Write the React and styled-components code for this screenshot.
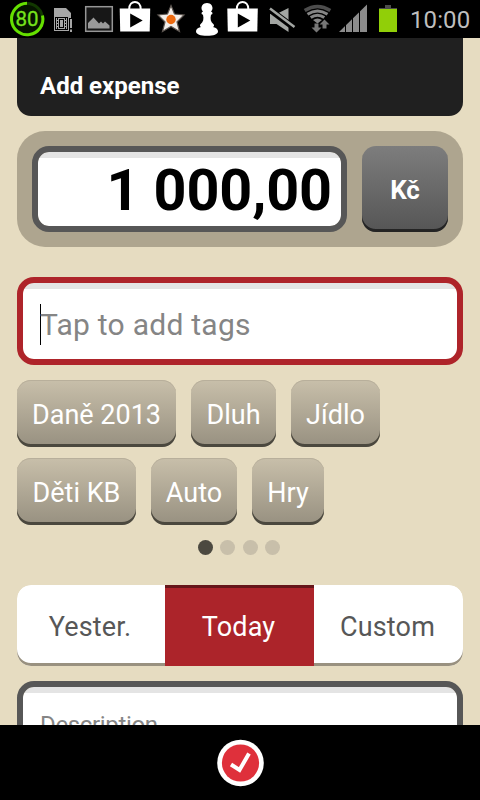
import React from "react";
import styled, { createGlobalStyle } from "styled-components";

const GlobalStyle = createGlobalStyle`
  * { box-sizing: border-box; }
  body { margin: 0; background: #e6dcc1; }
`;

const Screen = styled.div`
  width: 480px;
  height: 800px;
  overflow: hidden;
  display: flex;
  flex-direction: column;
  background: #e6dcc1;
  font-family: Roboto, "Noto Sans", sans-serif;
`;

const StatusBar = styled.header`
  flex: none;
  height: 38px;
  display: flex;
  background: #000;
`;

const Glyph = styled.svg`
  flex: none;
  display: block;
`;

const Clock = styled.time`
  padding-left: 6px;
  font-size: 24px;
  line-height: 40px;
  letter-spacing: 0.1px;
  white-space: nowrap;
  color: #bebebe;
`;

const Content = styled.main`
  flex: 1;
  min-height: 0;
  overflow: hidden;
  padding: 0 17px;
  display: flex;
  flex-direction: column;
`;

const TitleBar = styled.div`
  flex: none;
  height: 78px;
  padding: 33px 23px 0;
  border-radius: 0 0 14px 14px;
  background: #202020;
`;

const Title = styled.h1`
  margin: 0;
  font-size: 24px;
  line-height: 30px;
  font-weight: 700;
  color: #fff;
`;

const AmountPanel = styled.section`
  flex: none;
  height: 116px;
  margin-top: 15px;
  padding: 15px;
  display: flex;
  gap: 15px;
  border-radius: 28px;
  background: #aea58f;
`;

const Field = styled.div`
  flex: ${(p) => (p.$grow ? 1 : "none")};
  height: ${(p) => p.$height}px;
  margin-top: ${(p) => p.$top || 0}px;
  padding: ${(p) => p.$inset || 0}px 9px 0 17px;
  display: flex;
  align-items: center;
  justify-content: ${(p) => (p.$end ? "flex-end" : "flex-start")};
  border: 6px solid ${(p) => p.$edge || "#575757"};
  border-radius: 17px;
  background: linear-gradient(#e4e4e4 6px, #fff 6px) padding-box;
`;

const Amount = styled.span`
  font-size: 57.5px;
  line-height: 68px;
  font-weight: 700;
  letter-spacing: -0.1px;
  white-space: pre;
  color: #000;
`;

const Currency = styled.button`
  width: 86px;
  height: 86px;
  padding: 1px 0 0;
  border: 0;
  border-radius: 14px;
  background: linear-gradient(#7d7d7d, #555);
  box-shadow: inset 0 -3px 0 #242424;
  color: #fff;
  font: 700 26px/30px Roboto, sans-serif;
`;

const Caret = styled.i`
  width: 1px;
  height: 41px;
  margin-right: -1px;
  background: #000;
`;

const Placeholder = styled.span`
  font-size: ${(p) => p.$size}px;
  line-height: 36px;
  letter-spacing: ${(p) => p.$spacing || 0}px;
  color: #858585;
`;

const TagRow = styled.div`
  flex: none;
  display: flex;
  gap: 15px;
  margin-top: ${(p) => p.$top}px;
`;

const Tag = styled.button`
  flex: none;
  width: ${(p) => p.$width}px;
  height: 67px;
  padding: 3px 0 0;
  border: 0;
  border-radius: 14px;
  background: linear-gradient(#c8bfaa, #979080);
  box-shadow: inset 0 -3px 0 #4b483e, inset 0 1px 0 #b8af9b;
  color: #fff;
  font: 400 27px/32px Roboto, sans-serif;
  white-space: nowrap;
`;

const Pager = styled.div`
  flex: none;
  height: 15px;
  margin-top: 15px;
  margin-right: 2px;
  display: flex;
  justify-content: center;
  gap: 7.5px;
`;

const Dot = styled.i`
  width: 15px;
  height: 15px;
  border-radius: 50%;
  background: ${(p) => (p.$active ? "#4c4940" : "#c8bfaa")};
`;

const Segments = styled.div`
  flex: none;
  height: 81px;
  margin-top: 30px;
  display: grid;
  grid-template-columns: 148px 149px 149px;
  border-radius: 14px;
  overflow: hidden;
`;

const Segment = styled.button`
  border: 0;
  padding: 3px 2px 0 0;
  border-radius: ${(p) => p.$radius || 0};
  background: ${(p) => (p.$active ? "#ac242a" : "#fff")};
  box-shadow: ${(p) => (p.$active ? "inset 0 3px 0 #66161a" : "inset 0 -3px 0 #999180")};
  color: ${(p) => (p.$active ? "#fff" : "#575757")};
  font: 400 27px/32px Roboto, sans-serif;
  letter-spacing: 0.15px;
`;

const BottomBar = styled.footer`
  flex: none;
  height: 75px;
  display: flex;
  align-items: center;
  justify-content: center;
  background: #000;
`;

const StatusIcon = ({ x, w, children }) => (
  <Glyph width={w} height="38" viewBox={`${x} 0 ${w} 38`}>{children}</Glyph>
);

const StoreBag = ({ x, w, left }) => (
  <StatusIcon x={x} w={w}>
    <g transform={`translate(${left} 0)`}>
      <path d="M9.500 9C9.500 -0.500 21 -0.500 21 9" fill="none" stroke="#fff" strokeWidth="2" />
      <path d="M0 8.500h30.500l-.5 23h-29.500z" fill="#fff" />
      <path d="M10.500 13.500v14l12.500-7z" fill="#000" />
    </g>
  </StatusIcon>
);

const StatusIcons = () => (
  <>
    <StatusIcon x={0} w={48}>
      <circle cx="27" cy="19" r="15.500" fill="#061400" stroke="#123800" strokeWidth="3" />
      <path d="M42.500 15.500A15.700 15.700 0 1 1 27 3.300" fill="none" stroke="#66e000" strokeWidth="3" />
      <text x="27" y="26.200" textAnchor="middle" fontFamily="Roboto, sans-serif" fontSize="20.500" fill="#76e41c" stroke="#76e41c" strokeWidth=".3">80</text>
    </StatusIcon>
    <StatusIcon x={48} w={32}>
      <path d="M54 8h12l5 5v18h-17z" fill="#a6a6a6" />
      <rect x="55.500" y="17.500" width="12" height="12" fill="none" stroke="#000" />
      <rect x="59.500" y="19.500" width="4" height="8" fill="#a6a6a6" stroke="#000" />
      <path d="M57.500 18v11M65.500 18v11" stroke="#000" strokeWidth="1" strokeDasharray="2 1" />
      <path d="M69 18h4v14h-4z" fill="#000" />
      <path d="M71 19v9M71 29.500v2.500" stroke="#a6a6a6" strokeWidth="2" />
    </StatusIcon>
    <StatusIcon x={80} w={37}>
      <rect x="85.700" y="6.700" width="26.600" height="24.600" fill="#171717" stroke="#969696" strokeWidth="1.500" />
      <path d="M88 28.500v-5.500l5.500-5.500 5.500 6 2-2 2 2 2-2 4.500 4v3z" fill="#999" />
    </StatusIcon>
    <StoreBag x={117} w={37} left={119.7} />
    <StatusIcon x={154} w={36}>
      <path d="M171 5.500l3.500 8.500 9.500 1-7 7 2.500 9.500-8.500-5-8.500 5 2.500-9.500-7-7 9.500-1z" fill="#f2eeea" stroke="#5c5550" strokeWidth="1.200" />
      <circle cx="171" cy="19.500" r="4.700" fill="#ec6a10" />
    </StatusIcon>
    <StatusIcon x={190} w={33}>
      <path d="M207 3c4 0 5.500 3 5.500 5 0 1.500-.6 2.500-1.500 3.500 2 1 2 2.800 0 3.200-1 4.500-.3 7 2.300 9.300 1.200 1.100.8 2.300-.3 3 3.500.8 5 2.500 5 4.500 0 2.800-4.500 4.300-11 4.300s-11-1.500-11-4.300c0-2 1.500-3.700 5-4.500-1.100-.7-1.500-1.900-.3-3 2.600-2.300 3.300-4.800 2.300-9.300-2-.4-2-2.200 0-3.200-.9-1-1.500-2-1.500-3.500 0-2 1.500-5 5.500-5z" fill="#fff" />
    </StatusIcon>
    <StoreBag x={223} w={40} left={227.3} />
    <StatusIcon x={263} w={37}>
      <path d="M270 14h6.500l12-6v24l-12-8h-6.500z" fill="#a3a6a3" />
      <path d="M269 9l26 19.500" stroke="#000" strokeWidth="6" />
      <path d="M270 8.500l24.500 18.500" stroke="#a3a6a3" strokeWidth="2.500" />
    </StatusIcon>
    <StatusIcon x={300} w={35}>
      <g fill="none" strokeWidth="3">
        <path d="M304.700 10.500q12.800-8 25.600 0" stroke="#4d4d4d" strokeWidth="3.500" />
        <path d="M307.500 14.200q10-6.500 20 0" stroke="#858585" />
        <path d="M310.700 17.600q6.800-4.800 13.600 0" stroke="#858585" />
      </g>
      <path d="M313 20q4.500-3 9 0l-4.500 3.500z" fill="#858585" />
      <path d="M314.500 23.500h4v4h3l-5 5-5-5h3z" fill="#777" />
      <path d="M324.500 19.500l5 5h-3v4h-4v-4h-3z" fill="#777" />
    </StatusIcon>
    <StatusIcon x={335} w={38}>
      <path d="M339 32L367 4.500V32z" fill="#8c8c8c" />
      <path d="M345.500 20v12M352.500 13v19M359.500 7v25" stroke="#000" strokeWidth="1" />
    </StatusIcon>
    <StatusIcon x={373} w={31}>
      <path d="M385 5h6v3h6v1h-18v-1h6z" fill="#4c4c4c" />
      <rect x="379" y="9" width="18" height="23" fill="#91cf08" />
    </StatusIcon>
  </>
);

export default function App() {
  return (
    <Screen>
      <GlobalStyle />
      <StatusBar>
        <StatusIcons />
        <Clock>10:00</Clock>
      </StatusBar>
      <Content>
        <TitleBar><Title>Add expense</Title></TitleBar>
        <AmountPanel>
          <Field $grow $end $inset={3} $height={86}><Amount>1 000,00</Amount></Field>
          <Currency>Kč</Currency>
        </AmountPanel>
        <Field $top={30} $inset={7} $height={88} $edge="#ae242a">
          <Caret />
          <Placeholder $size={30} $spacing={0.25}>Tap to add tags</Placeholder>
        </Field>
        <TagRow $top={15}>
          <Tag $width={159}>Daně 2013</Tag>
          <Tag $width={85}>Dluh</Tag>
          <Tag $width={89}>Jídlo</Tag>
        </TagRow>
        <TagRow $top={11}>
          <Tag $width={119}>Děti KB</Tag>
          <Tag $width={86}>Auto</Tag>
          <Tag $width={72}>Hry</Tag>
        </TagRow>
        <Pager><Dot $active /><Dot /><Dot /><Dot /></Pager>
        <Segments>
          <Segment $radius="14px 0 0 14px">Yester.</Segment>
          <Segment $active>Today</Segment>
          <Segment $radius="0 14px 14px 0">Custom</Segment>
        </Segments>
        <Field $top={15} $height={88}><Placeholder $size={24} $spacing={-0.35}>Description</Placeholder></Field>
      </Content>
      <BottomBar>
        <Glyph width="48" height="48" viewBox="0 0 48 48">
          <circle cx="24.500" cy="24" r="23.300" fill="#fff" />
          <circle cx="24.500" cy="24" r="18.600" fill="#df303b" />
          <path d="M15 25.500l8.500 5.500 9.500-16.500" fill="none" stroke="#fff" strokeWidth="4" />
        </Glyph>
      </BottomBar>
    </Screen>
  );
}
